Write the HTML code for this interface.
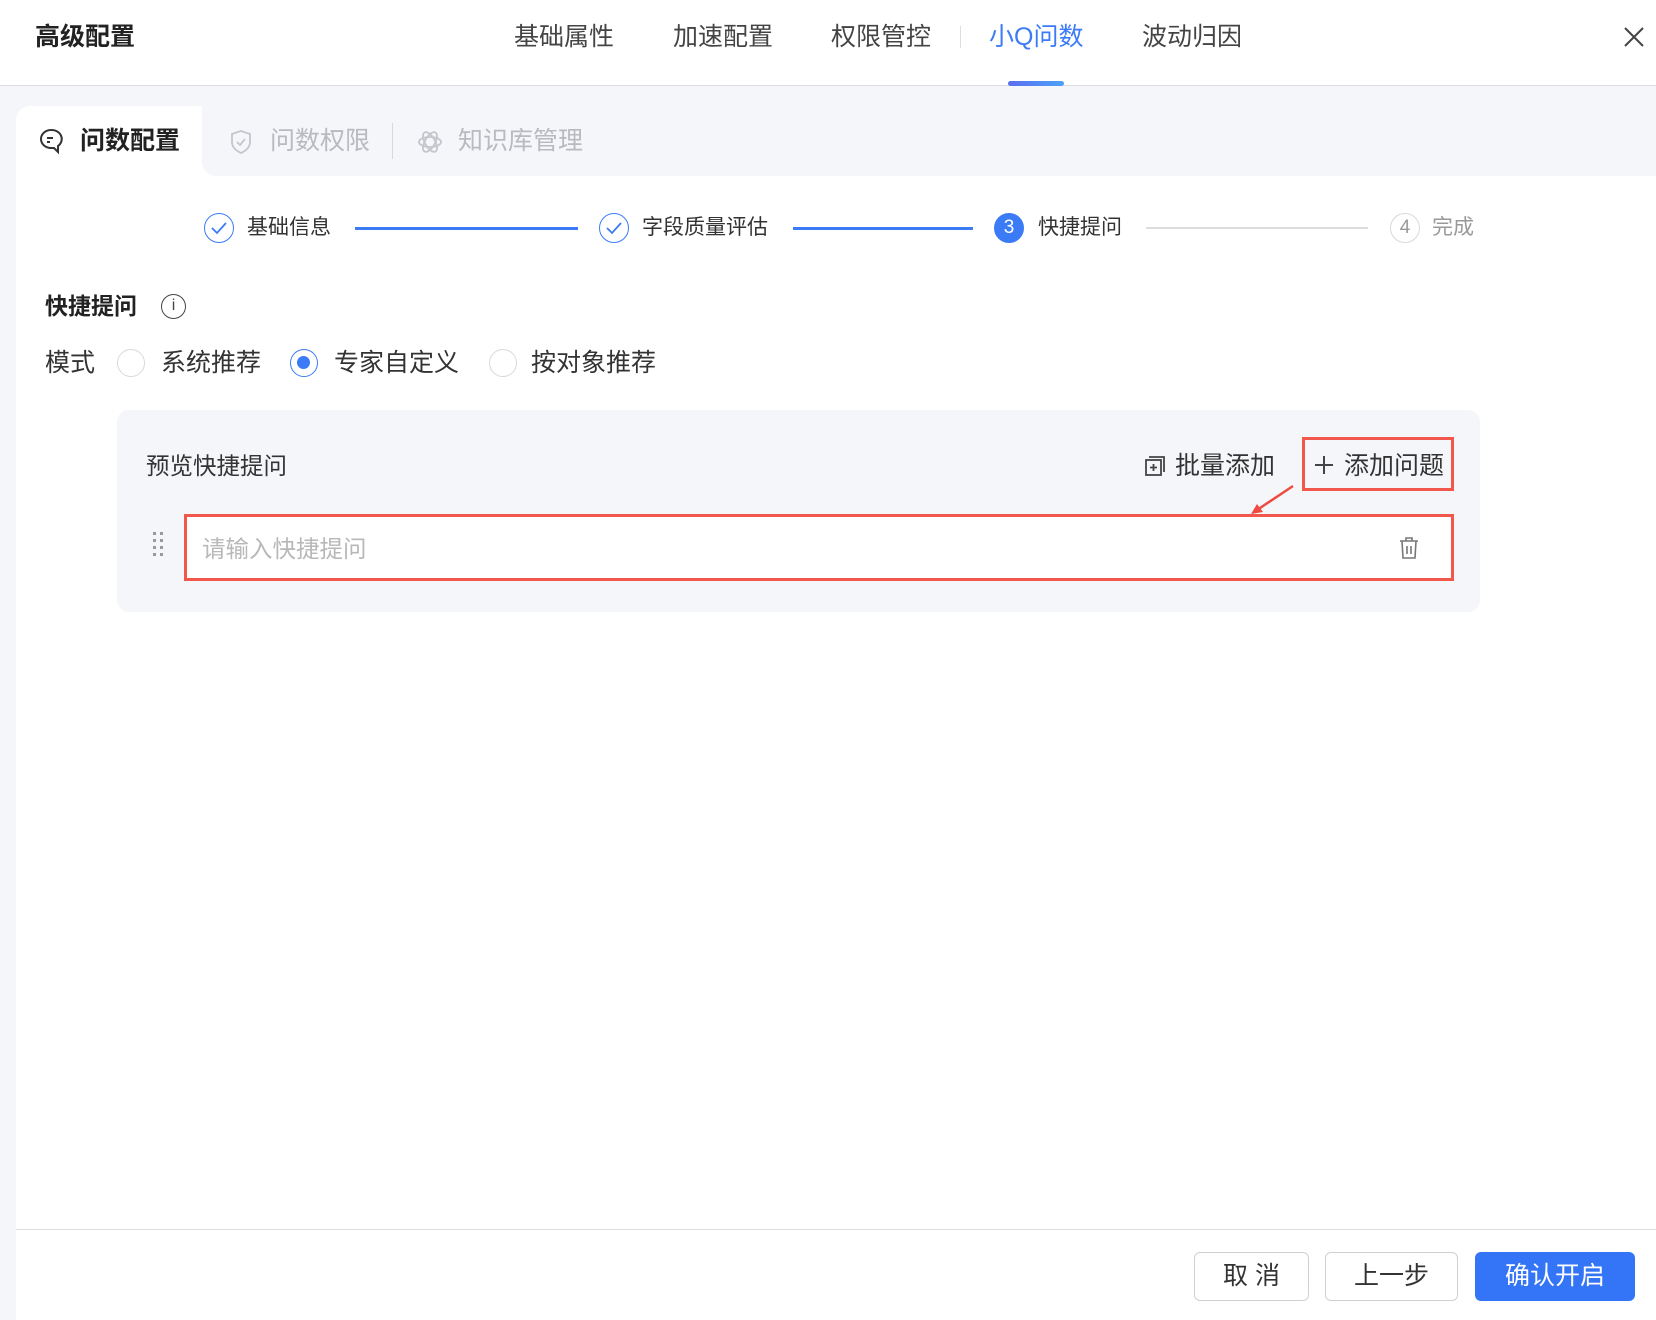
<!DOCTYPE html>
<html><head><meta charset="utf-8"><style>
*{margin:0;padding:0;box-sizing:border-box}
body{width:1656px;height:1320px;overflow:hidden;background:#f5f6fa;font-family:"Liberation Sans","Noto Sans CJK SC",sans-serif;color:#333;position:relative}
.a{position:absolute;white-space:nowrap}
.hdr{position:absolute;left:0;top:0;width:1656px;height:86px;background:#fff;border-bottom:1px solid #dcdde0}
.tab{font-size:25px;color:#444;top:19px;line-height:36px}
.step{font-size:21px;color:#333;line-height:30px;top:213px}
.circ{position:absolute;width:30px;height:30px;border-radius:50%;border:1.5px solid #3b7bf6;top:213px}
.radio{position:absolute;width:28px;height:28px;border-radius:50%;border:1.5px solid #d9d9d9;background:#fff;top:349px}
.rl{font-size:25px;top:345px;line-height:36px;color:#333}
.btn{position:absolute;top:1252px;height:49px;border-radius:6px;border:1.5px solid #d0d0d0;background:#fff;font-size:25px;line-height:46px;text-align:center;color:#333}
</style></head><body>
<div class="hdr"></div>
<div class="a" style="left:35px;top:19px;font-size:25px;font-weight:bold;line-height:36px;color:#222">高级配置</div>
<div class="a tab" style="left:514px">基础属性</div>
<div class="a tab" style="left:673px">加速配置</div>
<div class="a tab" style="left:831px">权限管控</div>
<div class="a" style="left:960px;top:26px;width:1px;height:22px;background:#ddd"></div>
<div class="a tab" style="left:989px;color:#3b7bf6">小Q问数</div>
<div class="a tab" style="left:1142px">波动归因</div>
<div class="a" style="left:1008px;top:81px;width:56px;height:5px;border-radius:3px;background:linear-gradient(90deg,#5b6ef0,#4aa2f7)"></div>
<svg class="a" style="left:1622px;top:25px" width="24" height="24" viewBox="0 0 24 24"><path d="M3 3L21 21M21 3L3 21" stroke="#444" stroke-width="2"/></svg>

<div class="a" style="left:16px;top:106px;width:1640px;height:1214px;background:#fff;border-radius:14px 0 0 0"></div>
<div class="a" style="left:202px;top:106px;width:1454px;height:70px;background:#f5f6fa;border-radius:0 0 0 14px"></div>
<svg class="a" style="left:38px;top:127px" width="28" height="28" viewBox="0 0 28 28" fill="none" stroke="#333" stroke-width="2"><path d="M13 3a10 9 0 1 0 0 18l3 0 4 4v-6a10 9 0 0 0-7-16z"/><path d="M9 11h6M9 15h3"/></svg>
<div class="a" style="left:80px;top:123px;font-size:25px;font-weight:bold;line-height:36px;color:#222">问数配置</div>
<svg class="a" style="left:229px;top:129px" width="24" height="26" viewBox="0 0 24 26" fill="none" stroke="#c4c6cc" stroke-width="1.8"><path d="M12 2l9 3v8c0 6-5 9-9 11-4-2-9-5-9-11V5z"/><path d="M8 13l3 3 5-6"/></svg>
<div class="a" style="left:270px;top:123px;font-size:25px;line-height:36px;color:#b8babf">问数权限</div>
<div class="a" style="left:392px;top:123px;width:1px;height:36px;background:#d6d8dc"></div>
<svg class="a" style="left:416px;top:129px" width="28" height="26" viewBox="0 0 28 26" fill="none" stroke="#c4c6cc" stroke-width="1.8"><ellipse cx="14" cy="13" rx="11" ry="5"/><ellipse cx="14" cy="13" rx="11" ry="5" transform="rotate(60 14 13)"/><ellipse cx="14" cy="13" rx="11" ry="5" transform="rotate(-60 14 13)"/></svg>
<div class="a" style="left:458px;top:123px;font-size:25px;line-height:36px;color:#b8babf">知识库管理</div>

<div class="circ" style="left:204px"></div><svg class="a" style="left:204px;top:213px" width="30" height="30"><path d="M8 15l5 5 9-10" fill="none" stroke="#3b7bf6" stroke-width="1.8"/></svg>
<div class="a step" style="left:247px">基础信息</div>
<div class="a" style="left:355px;top:227px;width:223px;height:3px;background:#3b7bf6"></div>
<div class="circ" style="left:599px"></div><svg class="a" style="left:599px;top:213px" width="30" height="30"><path d="M8 15l5 5 9-10" fill="none" stroke="#3b7bf6" stroke-width="1.8"/></svg>
<div class="a step" style="left:642px">字段质量评估</div>
<div class="a" style="left:793px;top:227px;width:180px;height:3px;background:#3b7bf6"></div>
<div class="circ" style="left:994px;background:#3b7bf6;color:#fff;font-size:19px;text-align:center;line-height:27px">3</div>
<div class="a step" style="left:1038px">快捷提问</div>
<div class="a" style="left:1146px;top:227px;width:222px;height:2px;background:#dcdcdc"></div>
<div class="circ" style="left:1390px;border-color:#d9d9d9;color:#999;font-size:19px;text-align:center;line-height:27px">4</div>
<div class="a step" style="left:1432px;color:#999">完成</div>

<div class="a" style="left:45px;top:289px;font-size:23px;font-weight:bold;line-height:34px;color:#222">快捷提问</div>
<div class="a" style="left:161px;top:294px;width:25px;height:25px;border-radius:50%;border:1.8px solid #444;font-size:16px;text-align:center;line-height:21px;color:#444">i</div>
<div class="a rl" style="left:45px">模式</div>
<div class="radio" style="left:117px"></div>
<div class="a rl" style="left:161px">系统推荐</div>
<div class="radio" style="left:290px;border-color:#3b7bf6"><div style="position:absolute;left:6px;top:6px;width:13px;height:13px;border-radius:50%;background:#3b7bf6"></div></div>
<div class="a rl" style="left:334px">专家自定义</div>
<div class="radio" style="left:489px"></div>
<div class="a rl" style="left:531px">按对象推荐</div>

<div class="a" style="left:117px;top:410px;width:1363px;height:202px;background:#f5f6fa;border-radius:12px"></div>
<div class="a" style="left:146px;top:449px;font-size:23.5px;line-height:34px;color:#333">预览快捷提问</div>
<svg class="a" style="left:1144px;top:455px" width="22" height="22" viewBox="0 0 22 22" fill="none" stroke="#444" stroke-width="1.8"><rect x="2" y="5" width="15" height="15"/><path d="M5 2h15v15M9.5 9v7M6 12.5h7"/></svg>
<div class="a" style="left:1175px;top:448px;font-size:25px;line-height:36px;color:#333">批量添加</div>
<div class="a" style="left:1302px;top:437px;width:152px;height:54px;border:3px solid #f2574c"></div>
<svg class="a" style="left:1314px;top:455px" width="20" height="20"><path d="M10 1v18M1 10h18" stroke="#444" stroke-width="2"/></svg>
<div class="a" style="left:1344px;top:448px;font-size:25px;line-height:36px;color:#333">添加问题</div>
<svg class="a" style="left:1245px;top:482px" width="55" height="35"><path d="M48 4L12 28" stroke="#ee4b40" stroke-width="2.5"/><path d="M6 32l12-2-6-8z" fill="#ee4b40"/></svg>
<div class="a" style="left:184px;top:514px;width:1270px;height:67px;border:3px solid #f2574c;background:#fff"></div>
<svg class="a" style="left:152px;top:531px" width="14" height="26"><g fill="#999"><rect x="1" y="1" width="3" height="3"/><rect x="8" y="1" width="3" height="3"/><rect x="1" y="8" width="3" height="3"/><rect x="8" y="8" width="3" height="3"/><rect x="1" y="15" width="3" height="3"/><rect x="8" y="15" width="3" height="3"/><rect x="1" y="22" width="3" height="3"/><rect x="8" y="22" width="3" height="3"/></g></svg>
<div class="a" style="left:202px;top:532px;font-size:23.5px;line-height:34px;color:#b8b8b8">请输入快捷提问</div>
<svg class="a" style="left:1398px;top:536px" width="22" height="24" viewBox="0 0 22 24" fill="none" stroke="#777" stroke-width="1.6"><path d="M2 5h18M8 5V2h6v3M4 5l1 17h12l1-17M9 10v8M13 10v8"/></svg>

<div class="a" style="left:16px;top:1229px;width:1640px;height:1px;background:#dcdde0"></div>
<div class="btn" style="left:1194px;width:115px">取 消</div>
<div class="btn" style="left:1325px;width:133px">上一步</div>
<div class="btn" style="left:1475px;width:160px;background:#3375f6;border-color:#3375f6;color:#fff">确认开启</div>
</body></html>
